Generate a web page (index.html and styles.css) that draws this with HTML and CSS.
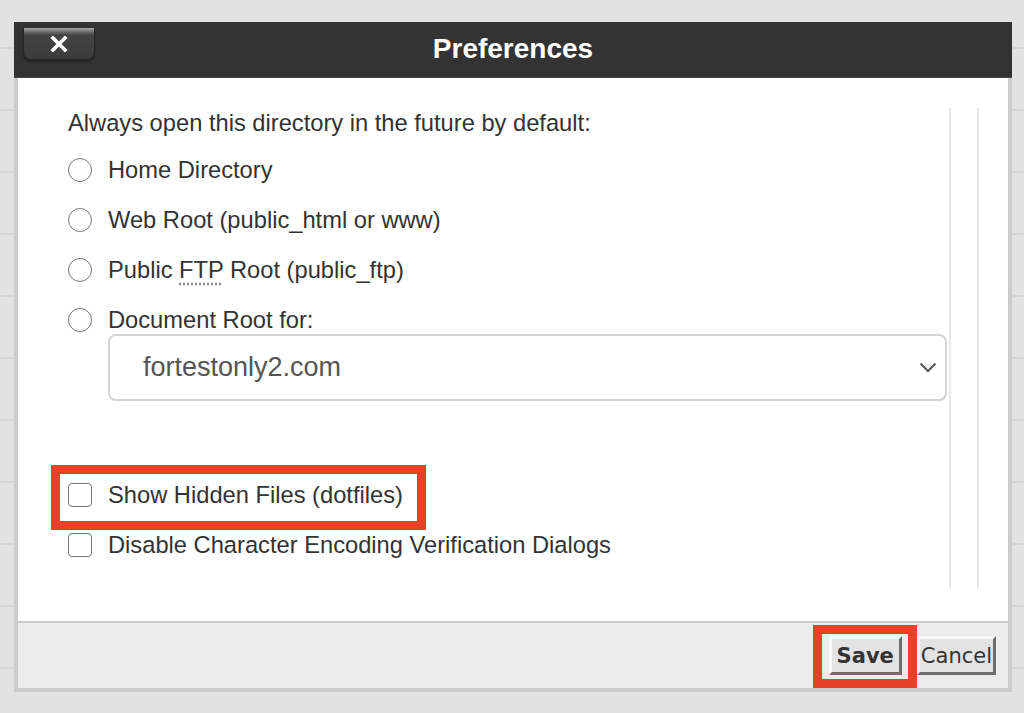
FILE: index.html
```html
<!DOCTYPE html>
<html lang="en">
<head>
    <meta charset="UTF-8">
    <meta name="viewport" content="width=device-width, initial-scale=1.0">
    <title>Preferences</title>
    <link rel="stylesheet" href="styles.css">
</head>
<body>
    <div class="dialog">
        <div class="titlebar">
            <button class="close-btn" title="Close">
                <svg width="18" height="16" viewBox="0 0 18 16">
                    <path d="M3 2 L15 14 M15 2 L3 14" stroke="#fff" stroke-width="3.6" stroke-linecap="square"/>
                </svg>
            </button>
            <h1 class="title">Preferences</h1>
            <span></span>
        </div>

        <div class="dialog-body">
            <div class="prefs">
                <p class="prefs-heading">Always open this directory in the future by default:</p>

                <div class="radio-list">
                    <label class="option"><span class="radio"></span><span>Home Directory</span></label>
                    <label class="option"><span class="radio"></span><span>Web Root (public_html or www)</span></label>
                    <label class="option"><span class="radio"></span><span>Public <abbr title="File Transfer Protocol">FTP</abbr> Root (public_ftp)</span></label>
                    <label class="option"><span class="radio"></span><span>Document Root for:</span></label>
                </div>

                <div class="select">
                    <span>fortestonly2.com</span>
                    <svg width="18" height="11" viewBox="0 0 18 11">
                        <path d="M1.5 1.5 L9 9 L16.5 1.5" fill="none" stroke="#555" stroke-width="2"/>
                    </svg>
                </div>

                <div class="check-list">
                    <label class="option highlight"><span class="checkbox"></span><span>Show Hidden Files (dotfiles)</span></label>
                    <label class="option"><span class="checkbox"></span><span>Disable Character Encoding Verification Dialogs</span></label>
                </div>
            </div>
            <div class="scroll-track"></div>
        </div>

        <div class="dialog-footer">
            <button class="btn btn-save">Save</button>
            <button class="btn">Cancel</button>
        </div>
    </div>
</body>
</html>
```

FILE: styles.css
```css
html {
    background-color: #e2e2e2;
}
body {
    margin: 0;
    padding: 22px 12px 0 14px;
    font-family: "Liberation Sans", Arial, sans-serif;
    color: #333;
    background: repeating-linear-gradient(#e2e2e2 0 60px, #d5d5d5 60px 62px);
    background-position: 0 -13px;
    min-height: 713px;
    box-sizing: border-box;
}
.dialog {
    width: 998px;
    background-color: #fff;
}
.titlebar {
    display: grid;
    grid-template-columns: 1fr auto 1fr;
    align-items: start;
    height: 55px;
    background-color: #333;
    border-bottom: 1px solid #474747;
}
.close-btn {
    width: 72px;
    height: 32px;
    margin: 6px 0 0 9px;
    padding: 0;
    border: 1px solid #262626;
    border-top: none;
    border-radius: 0 0 8px 8px;
    background: linear-gradient(#a8a8a8 0, #6a6a6a 4px, #444 7px, #3b3b3b 100%);
    box-shadow: 0 2px 2px rgba(0, 0, 0, 0.35);
    display: flex;
    align-items: center;
    justify-content: center;
    cursor: pointer;
}
.close-btn svg {
    margin-top: 1px;
}
.title {
    margin: 0;
    color: #fff;
    font-size: 28px;
    font-weight: bold;
    line-height: 54px;
}
.dialog-body {
    display: flex;
    border-left: 4px solid #ccc;
    border-right: 4px solid #ccc;
    border-bottom: 2px solid #ccc;
    padding: 30px 0 31px;
}
.prefs {
    flex: 1;
    padding: 0 0 30px 50px;
    font-size: 23.7px;
}
.scroll-track {
    width: 26px;
    margin: 0 29px 0 2px;
    border-left: 2px solid #e8e8e8;
    border-right: 2px solid #e8e8e8;
}
.prefs-heading {
    margin: 0;
    line-height: 30px;
}
.radio-list {
    display: flex;
    flex-direction: column;
    gap: 20px;
    margin-top: 17px;
}
.option {
    display: flex;
    align-items: center;
    height: 30px;
    line-height: 30px;
    cursor: pointer;
}
.radio {
    width: 22px;
    height: 22px;
    border: 1.5px solid #777;
    border-radius: 50%;
    margin-right: 16px;
    background: #fff;
}
.checkbox {
    width: 22px;
    height: 22px;
    border: 1.5px solid #777;
    border-radius: 4px;
    margin-right: 16px;
    background: #fff;
}
abbr {
    text-decoration: underline dotted #888;
    text-underline-offset: 5px;
}
.select {
    display: flex;
    align-items: center;
    justify-content: space-between;
    height: 67px;
    margin: -1px 0 0 40px;
    padding: 0 8px 0 33px;
    box-sizing: border-box;
    border: 2px solid #d4d4d4;
    border-radius: 8px;
    color: #555;
    font-size: 27px;
}
.check-list {
    display: flex;
    flex-direction: column;
    align-items: flex-start;
    gap: 20px;
    margin-top: 79px;
}
.highlight {
    position: relative;
}
.highlight::after {
    content: "";
    position: absolute;
    left: -17px;
    right: -23px;
    top: -15px;
    bottom: -20px;
    border: 9px solid #e8412b;
    pointer-events: none;
}
.dialog-footer {
    display: flex;
    justify-content: flex-end;
    align-items: center;
    gap: 15px;
    height: 65px;
    padding: 0 12px 0 0;
    background-color: #ececec;
    border-left: 4px solid #ccc;
    border-right: 4px solid #ccc;
    border-bottom: 4px solid #ccc;
}
.btn {
    height: 39px;
    padding: 0 1px;
    font-family: "DejaVu Sans", Verdana, sans-serif;
    font-size: 21px;
    color: #333;
    background-color: #e3e3e3;
    border: 3px solid;
    border-color: #f8f8f8 #6e6e6e #6e6e6e #f8f8f8;
    cursor: pointer;
}
.btn-save {
    position: relative;
    font-weight: bold;
    padding: 0 5px;
}
.btn-save::after {
    content: "";
    position: absolute;
    left: -19px;
    right: -18px;
    top: -14px;
    bottom: -16px;
    border: 9px solid #e8412b;
    pointer-events: none;
}
```
